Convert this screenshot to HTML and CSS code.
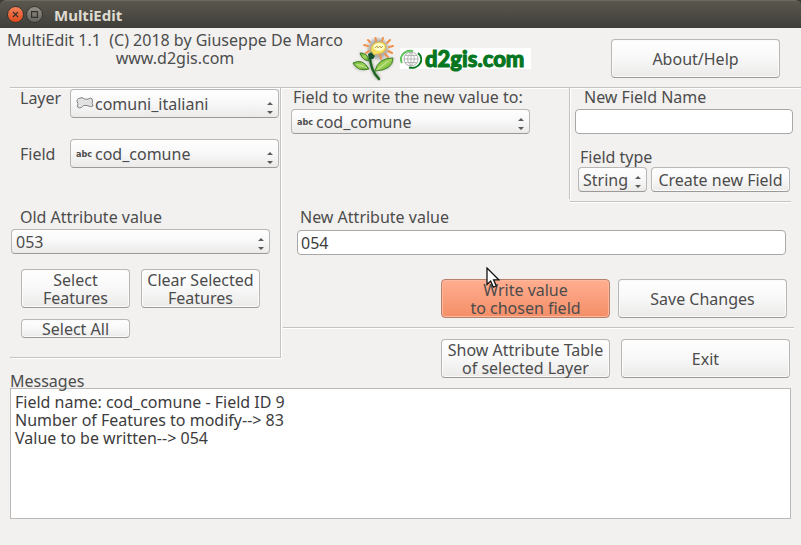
FILE: index.html
```html
<!DOCTYPE html>
<html lang="en">
<head>
<meta charset="utf-8">
<title>MultiEdit</title>
<link rel="stylesheet" href="styles.css">
</head>
<body>
<header class="titlebar">
  <button class="win-btn win-close" aria-label="Close">
    <svg viewBox="0 0 18 18"><path d="M6 6l6 6M12 6l-6 6"/></svg>
  </button>
  <button class="win-btn" aria-label="Maximize">
    <svg viewBox="0 0 18 18"><path d="M5.500 5.500h7v7h-7z"/></svg>
  </button>
  <h1 class="title">MultiEdit</h1>
</header>

<main class="window">
  <section class="banner">
    <p class="credits">MultiEdit 1.1&nbsp; (C) 2018 by Giuseppe De Marco<br>www.d2gis.com</p>
    <svg class="flower" viewBox="0 0 44 44" aria-hidden="true">
      <defs>
        <filter id="soft" x="-20%" y="-20%" width="140%" height="140%"><feGaussianBlur stdDeviation="1.5"/></filter>
        <linearGradient id="leaf" x1="0" y1="0" x2="1" y2="1"><stop offset="0" stop-color="#5fa32d"/><stop offset=".5" stop-color="#a4d65c"/><stop offset="1" stop-color="#4b9427"/></linearGradient>
      </defs>
      <g filter="url(#soft)" opacity=".55" fill="#777" stroke="#777">
        <path d="M1 27q9-5 14 5q-9 3-14-5zM24 33q4-12 17-12q0 12-17 12zM8 16q8 0 9 8q-7-1-9-8z"/>
        <path d="M18 20q0 12 9 22" fill="none" stroke-width="4"/>
        <circle cx="26" cy="12" r="10"/>
      </g>
      <g stroke="#ee914a" stroke-width="2" stroke-linecap="round">
        <path d="M18 5l-2-2M24 4l-.5-3M30 4l1-3M35 6l3-3M37 10l4-1M36 14l4 2M33 17l3 3M28 18l1 4M16 9l-4-1M17 14l-3 2"/>
      </g>
      <path d="M18 19q0 14 9 23" fill="none" stroke="#2f7a2a" stroke-width="2.600" stroke-linecap="round"/>
      <path d="M18 19q0 14 9 23" fill="none" stroke="#16502a" stroke-width="1"/>
      <g fill="url(#leaf)" stroke="#3d8423">
        <path d="M1 26q10-5 16 6q-11 3-16-6z"/><path d="M23 34q3-13 18-13q0 12-18 13z"/><path d="M8 16q8 0 9 8q-7-1-9-8z"/>
        <path d="M4 27l11 4M25 33l11-9" stroke="#d5edaa" stroke-width=".8"/>
      </g>
      <path d="M16 17l4-2 3 4-2 3h-4z" fill="#164e2e"/>
      <path d="M19 14q-1-7 7-9q8-1 8 6q-1 5-7 6q-3 0-5 1z" fill="#f5de62" stroke="#cfae45" stroke-width=".8"/>
      <ellipse cx="27" cy="10" rx="5.500" ry="4" fill="#fffbc4"/>
      <path d="M23 11l2-2 1 2 2-2 1 2 2-2" fill="none" stroke="#a88b3b" stroke-width=".8"/>
    </svg>
    <div class="brand">
      <svg class="globe" viewBox="0 0 22 20" aria-hidden="true">
        <circle cx="11" cy="10" r="7" fill="#fff" stroke="#999" stroke-width=".8"/>
        <path d="M4 10h14M5 6.500h12M5 13.500h12M11 3v14M11 3q-7 7 0 14M11 3q7 7 0 14" fill="none" stroke="#aaa" stroke-width=".8"/>
        <path d="M2 14A9.500 8.500 0 0 1 13 2" fill="none" stroke="#5fc45c" stroke-width="2"/>
        <path d="M18 4A9.500 8.500 0 0 1 9 18.500" fill="none" stroke="#087a22" stroke-width="2"/>
      </svg>
      <span>d2gis.com</span>
    </div>
    <button class="btn btn-tall btn-about">About/Help</button>
  </section>

  <div class="columns">
    <div class="source">
      <section class="source-panel">
        <div class="pair pair-top">
          <label for="layer">Layer</label>
          <div class="combo">
            <select id="layer" class="control big iconed"><option>comuni_italiani</option></select>
            <svg class="layer-icon" viewBox="0 0 18 14" aria-hidden="true"><path d="M2.500 2.500q4-2 6 .5q4 1 6-1q2 0 2 3q-1 2 .5 5q-2 1.500-6-.5q-4-1-5.500 2q-2 1-4-.5q1-4-.5-6q0-2 1.500-2.500z"/></svg>
            <svg class="arrows" viewBox="0 0 6 12" aria-hidden="true"><path d="M0 3l3-3 3 3zM0 9h6l-3 3z"/></svg>
          </div>
        </div>
        <div class="pair pair-field">
          <label for="field">Field</label>
          <div class="combo">
            <select id="field" class="control big iconed"><option>cod_comune</option></select>
            <span class="abc" aria-hidden="true">abc</span>
            <svg class="arrows" viewBox="0 0 6 12" aria-hidden="true"><path d="M0 3l3-3 3 3zM0 9h6l-3 3z"/></svg>
          </div>
        </div>
        <div class="old-value">
          <label for="old">Old Attribute value</label>
          <div class="combo">
            <select id="old" class="control"><option>053</option></select>
            <svg class="arrows" viewBox="0 0 6 12" aria-hidden="true"><path d="M0 3l3-3 3 3zM0 9h6l-3 3z"/></svg>
          </div>
        </div>
        <div class="select-actions">
          <button class="btn btn-tall">Select<br>Features</button>
          <button class="btn btn-tall">Clear Selected<br>Features</button>
          <button class="btn btn-short">Select All</button>
        </div>
      </section>
      <label class="messages-label" for="messages">Messages</label>
    </div>

    <div class="target">
      <div class="target-top">
        <section class="write-field">
          <label for="write">Field to write the new value to:</label>
          <div class="combo">
            <select id="write" class="control iconed"><option>cod_comune</option></select>
            <span class="abc" aria-hidden="true">abc</span>
            <svg class="arrows" viewBox="0 0 6 12" aria-hidden="true"><path d="M0 3l3-3 3 3zM0 9h6l-3 3z"/></svg>
          </div>
        </section>
        <section class="new-field">
          <div class="new-field-body">
            <label class="name-label" for="name">New Field Name</label>
            <input id="name" class="control text" type="text">
            <label class="type-label" for="type">Field type</label>
            <div class="type-row">
              <div class="combo">
                <select id="type" class="control"><option>String</option></select>
                <svg class="arrows" viewBox="0 0 6 12" aria-hidden="true"><path d="M0 3l3-3 3 3zM0 9h6l-3 3z"/></svg>
              </div>
              <button class="btn btn-create">Create new Field</button>
            </div>
          </div>
          <hr class="rule">
        </section>
      </div>
      <section class="new-value">
        <label for="new">New Attribute value</label>
        <input id="new" class="control text" type="text" value="054">
      </section>
      <div class="actions actions-write">
        <div class="hovered">
          <button class="btn btn-tall btn-hot">Write value<br>to chosen field</button>
          <svg class="pointer" viewBox="0 0 14 22" aria-hidden="true"><path d="M1 1v16.500l3.700-3.500 2.600 6.200 3-1.200-2.700-6.200h5.200z"/></svg>
        </div>
        <button class="btn btn-tall">Save Changes</button>
      </div>
      <hr class="rule rule-actions">
      <div class="actions actions-end">
        <button class="btn btn-tall">Show Attribute Table<br>of selected Layer</button>
        <button class="btn btn-tall">Exit</button>
      </div>
    </div>
  </div>

  <textarea id="messages" class="messages" readonly>Field name: cod_comune - Field ID 9
Number of Features to modify--&gt; 83
Value to be written--&gt; 054</textarea>
</main>
</body>
</html>
```
FILE: styles.css
```css
* { box-sizing: border-box; }

html, body { height: 100%; }

body {
  margin: 0;
  display: flex;
  flex-direction: column;
  background: #3c3b37;
  color: #4c4c4c;
  font: 16px/18px "Noto Sans", sans-serif;
}

button, input, select, textarea {
  margin: 0;
  font: inherit;
  color: inherit;
}

p, h1, hr { margin: 0; }

/* Title bar */
.titlebar {
  flex: none;
  display: flex;
  align-items: center;
  gap: 2px;
  height: 28px;
  padding-left: 7px;
  border-top: 1px solid #6b6961;
  border-radius: 6px 6px 0 0;
  background: linear-gradient(#5a574e, #3f3e39);
}

.win-btn {
  width: 17px;
  height: 17px;
  padding: 0;
  border: 1px solid #35342f;
  border-radius: 50%;
  background: linear-gradient(#908e85, #66645d);
}

.win-close { background: linear-gradient(#f58159, #df4a1b); }

.win-btn svg {
  display: block;
  fill: none;
  stroke: #33322e;
  stroke-width: 1.4;
}

.title {
  margin-left: 9px;
  color: #dfdbd2;
  font: bold 15px/20px "Noto Sans", sans-serif;
}

/* Window */
.window {
  flex: 1;
  display: flex;
  flex-direction: column;
  padding-bottom: 26px;
  background: #f2f1f0;
}

.banner {
  flex: none;
  display: flex;
  height: 59px;
  padding: 3px 21px 0 0;
}

.credits {
  flex: none;
  min-width: 350px;
  text-align: center;
  white-space: nowrap;
}

.flower {
  flex: none;
  width: 44px;
  height: 44px;
  margin: 6px 4px 0 2px;
}

.brand {
  flex: none;
  display: flex;
  align-items: center;
  gap: 3px;
  width: 131px;
  height: 21px;
  margin-top: 17px;
  background: #fff;
  color: #06761f;
  font: 900 22px/20px Lato, sans-serif;
  -webkit-text-stroke: 1px #06761f;
}

.globe {
  flex: none;
  width: 22px;
  height: 20px;
}

.btn {
  padding: 0;
  border: 1px solid #b9b7b5;
  border-bottom-color: #9b9a98;
  border-radius: 4px;
  background: linear-gradient(#fefefe, #f9f9f9 45%, #ebeae9);
  box-shadow: inset 0 0 0 1px #fbfbfb;
  white-space: nowrap;
}

.btn-tall { height: 39px; }
.btn-short { height: 19px; }

.btn-about {
  width: 169px;
  margin: 8px 0 0 auto;
}

.btn-hot {
  border-color: #b78069;
  background: linear-gradient(#ffae90, #f48e67);
  box-shadow: inset 0 0 0 1px #ffb89d;
}

.rule {
  height: 2px;
  border: 0;
  border-top: 1px solid #c4c3c2;
  background: #fff;
}

/* Columns */
.columns {
  flex: none;
  display: grid;
  grid-template-columns: 271fr 520fr;
  margin-left: 10px;
  border-top: 1px solid #c4c3c2;
  box-shadow: inset 0 1px #fff;
}

.source {
  display: flex;
  flex-direction: column;
}

.source-panel {
  height: 270px;
  padding-top: 1px;
  border-right: 1px solid #c4c3c2;
  border-bottom: 1px solid #c4c3c2;
  box-shadow: 1px 1px #fff;
}

.pair {
  display: flex;
  align-items: center;
  padding: 0 1px 0 10px;
}

.pair label { width: 50px; }
.pair .combo { flex: 1; }
.pair-top { align-items: flex-start; }
.pair-field { margin-top: 21px; }

.combo {
  position: relative;
  display: flex;
}

.control {
  width: 100%;
  height: 25px;
  padding: 0 4px;
  border: 1px solid #b9b7b5;
  border-bottom-color: #9b9a98;
  border-radius: 4px;
  background: linear-gradient(#fefefe, #f9f9f9 45%, #ebeae9);
  line-height: 22px;
  appearance: none;
}

.big { height: 29px; }
.iconed { padding-left: 24px; }

.text {
  padding: 0 3px;
  border-color: #aaa8a6;
  background: #fff;
  color: #3c3c3c;
}

.arrows {
  position: absolute;
  right: 6px;
  bottom: 4px;
  width: 6px;
  height: 12px;
  fill: #5b5b5b;
  pointer-events: none;
}

.layer-icon {
  position: absolute;
  left: 6px;
  top: 7px;
  width: 18px;
  height: 14px;
  fill: #e2e2e2;
  stroke: #858585;
}

.abc {
  position: absolute;
  left: 6px;
  top: 0;
  bottom: 0;
  display: flex;
  align-items: center;
  font: bold 9px/12px "DejaVu Sans Condensed", sans-serif;
  pointer-events: none;
}

.old-value {
  margin-top: 40px;
  padding: 0 10px 0 1px;
}

.old-value label,
.write-field label,
.new-field label,
.new-value label {
  display: block;
}

.old-value label { padding: 0 0 3px 9px; }

.select-actions {
  display: grid;
  grid-template-columns: 109fr 119fr;
  gap: 11px;
  margin-top: 15px;
  padding: 0 20px 0 11px;
}

.messages-label {
  position: relative;
  z-index: 1;
  margin-top: auto;
  line-height: 14px;
}

/* Target side */
.target-top {
  display: grid;
  grid-template-columns: 288fr 232fr;
}

.write-field { padding: 0 39px 0 10px; }
.write-field label { padding: 0 0 3px 2px; white-space: nowrap; }

.new-field { padding-right: 8px; }

.new-field-body {
  height: 111px;
  padding-left: 5px;
  border-left: 1px solid #c4c3c2;
  box-shadow: inset 1px 0 #fff;
}

.new-field .rule { margin: 2px 2px 0 1px; }
.name-label { padding: 0 0 3px 9px; }
.type-label { padding: 14px 0 1px 5px; }

.type-row {
  display: grid;
  grid-template-columns: 69fr 139fr;
  gap: 4px;
  padding: 0 3px;
}

.new-value { padding: 5px 15px 0 16px; }
.new-value label { padding: 0 0 4px 3px; }

.actions {
  display: grid;
  grid-template-columns: 169px 169px;
  justify-content: end;
}

.actions-write {
  gap: 8px;
  padding: 24px 14px 9px 0;
}

.actions-end {
  gap: 11px;
  padding: 10px 11px 10px 0;
}

.rule-actions { margin: 0 7px 0 2px; }

.hovered {
  position: relative;
  display: grid;
}

.pointer {
  position: absolute;
  left: 45px;
  top: -12px;
  width: 14px;
  height: 22px;
  fill: #fff;
  stroke: #111;
  stroke-width: 1.3;
}

.messages {
  flex: 1;
  min-height: 90px;
  margin: 0 10px;
  padding: 4px;
  border: 1px solid #bab9b7;
  background: #fff;
  color: #3c3c3c;
  resize: none;
  outline: 0;
}
```
